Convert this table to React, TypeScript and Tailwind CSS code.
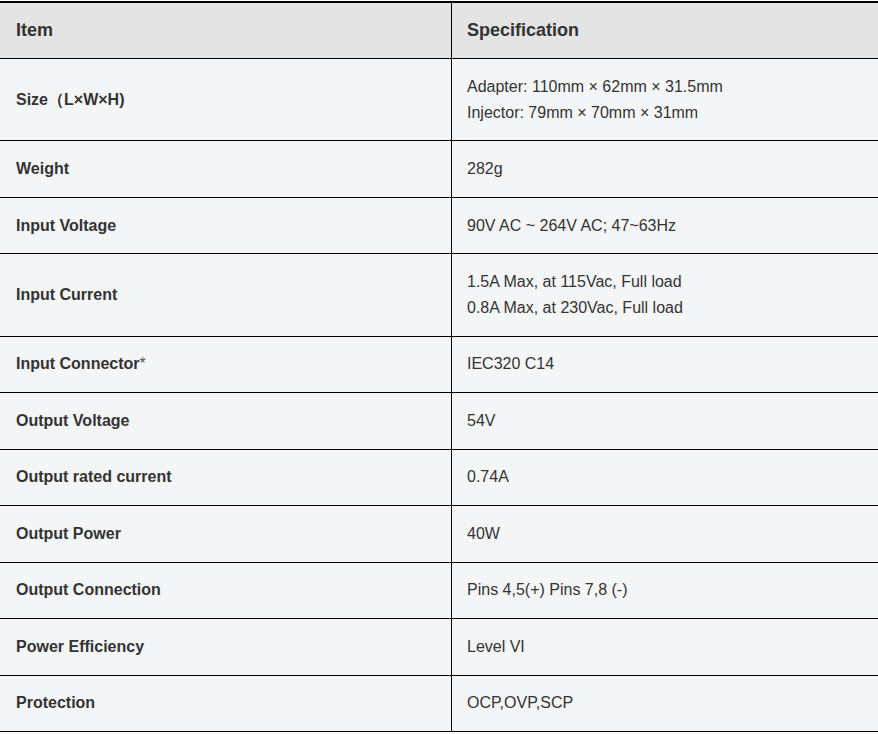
const rows: { item: string; spec: string[] }[] = [
  { item: 'Size', spec: ['Adapter: 110mm × 62mm × 31.5mm', 'Injector: 79mm × 70mm × 31mm'] },
  { item: 'Weight', spec: ['282g'] },
  { item: 'Input Voltage', spec: ['90V AC ~ 264V AC; 47~63Hz'] },
  { item: 'Input Current', spec: ['1.5A Max, at 115Vac, Full load', '0.8A Max, at 230Vac, Full load'] },
  { item: 'Input Connector', spec: ['IEC320 C14'] },
  { item: 'Output Voltage', spec: ['54V'] },
  { item: 'Output rated current', spec: ['0.74A'] },
  { item: 'Output Power', spec: ['40W'] },
  { item: 'Output Connection', spec: ['Pins 4,5(+) Pins 7,8 (-)'] },
  { item: 'Power Efficiency', spec: ['Level VI'] },
  { item: 'Protection', spec: ['OCP,OVP,SCP'] },
];

const App = () => {
  return (
    <div className="min-h-screen bg-white pt-px text-[#333] font-['Liberation_Sans',Arial,sans-serif]">
      <div className="border-t-2 border-black bg-[#f4f5f7]">
        {/* header */}
        <div className="grid grid-cols-[452px_1fr] bg-[#e4e4e4] border-b border-black">
          <div className="border-r border-black pl-4 py-[15px] text-[18px] leading-[25px] font-bold">Item</div>
          <div className="pl-[15px] py-[15px] text-[18px] leading-[25px] font-bold">Specification</div>
        </div>

        {rows.map((r) => (
          <div key={r.item} className="grid grid-cols-[452px_1fr] border-b border-black">
            <div className="border-r border-black pl-4 py-[14.875px] text-[16px] leading-[25.75px] font-bold flex items-center">
              {r.item === 'Size' ? (
                <span className="whitespace-pre">Size（L×W×H)</span>
              ) : r.item === 'Input Connector' ? (
                <span>
                  Input Connector<span className="font-normal text-[#555]">*</span>
                </span>
              ) : (
                r.item
              )}
            </div>
            <div className="pl-[15px] py-[14.875px] text-[16px] leading-[25.75px]">
              {r.spec.map((s) => (
                <div key={s}>{s}</div>
              ))}
            </div>
          </div>
        ))}
      </div>
    </div>
  );
};

export default App;
